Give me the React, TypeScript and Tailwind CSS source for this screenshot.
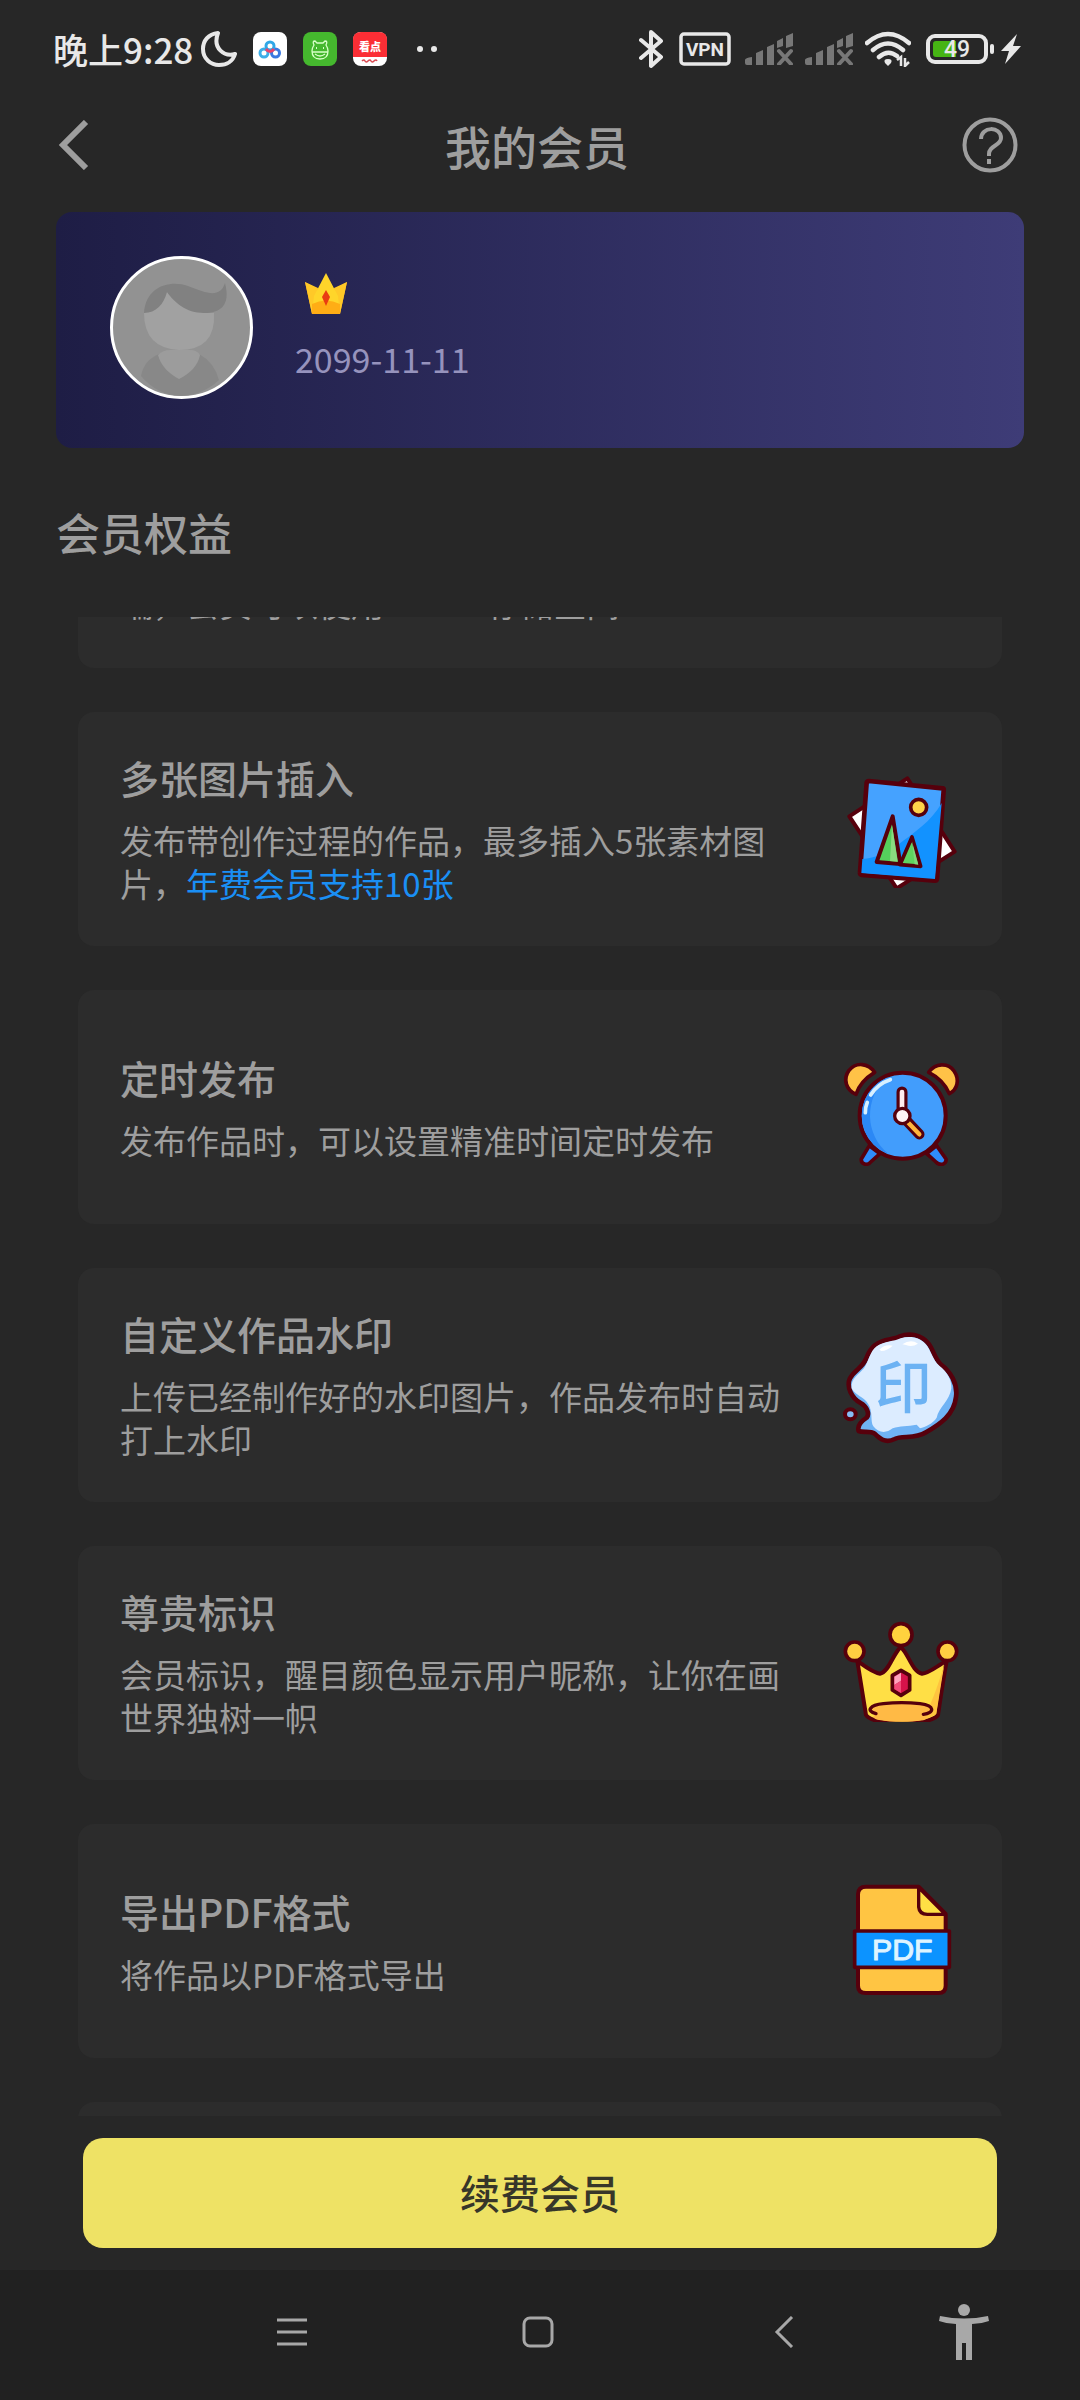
import type { ReactNode } from 'react'

type Benefit = {
  title: string
  desc: string
  highlight?: string
  icon: ReactNode
}

const OUTLINE = '#56000c'

function PhotoIcon() {
  return (
    <svg className="size-[120px]" viewBox="66 55 360 360" strokeLinejoin="round" aria-hidden="true">
      <path d="M262 86 L404 306 L230 416 L88 200 Z" fill="#fff" stroke={OUTLINE} strokeWidth="12" />
      <path d="M146 94 L368 116 Q372 117 371 122 L351 388 Q350 393 345 393 L125 376 Q119 375 120 369 L140 99 Q141 94 146 94 Z" fill="#45a2ff" stroke={OUTLINE} strokeWidth="14" />
      <path d="M365 160 C335 215 280 250 236 284 C205 310 165 326 127 328 L124 370 L345 388 Z" fill="#1292ff" />
      <circle cx="296" cy="173" r="24" fill="#ffd24a" stroke={OUTLINE} strokeWidth="11" />
      <path d="M276 262 L302 350 L240 345 Z" fill="#5fd45f" stroke={OUTLINE} strokeWidth="11" />
      <path d="M276 275 L284 344 L295 345 Z" fill="#7ed97a" />
      <path d="M218 200 L241 343 L170 337 Z" fill="#55cf5c" stroke={OUTLINE} strokeWidth="12" />
      <path d="M216 226 L210 334 L233 336 Z" fill="#8bdb80" />
    </svg>
  )
}

function ClockIcon() {
  return (
    <svg className="size-[120px]" viewBox="66 19 360 360" strokeLinejoin="round" strokeLinecap="round" aria-hidden="true">
      <path d="M148 318 L124 358 Q122 370 136 374 Q146 375 152 367 L180 342 Z" fill="#2f8cfb" stroke={OUTLINE} strokeWidth="11" />
      <path d="M350 318 L378 358 Q380 369 368 374 Q355 376 348 367 L320 342 Z" fill="#2f8cfb" stroke={OUTLINE} strokeWidth="11" />
      <path d="M164 98 C145 70 108 66 87 92 C68 118 78 152 108 164 C117 136 138 114 164 98 Z" fill="#ffc247" stroke={OUTLINE} strokeWidth="11" />
      <path d="M326 98 C346 70 384 68 402 94 C420 120 412 150 388 162 C377 136 354 112 326 98 Z" fill="#ffc247" stroke={OUTLINE} strokeWidth="11" />
      <circle cx="248" cy="228" r="129" fill="#429dfc" stroke={OUTLINE} strokeWidth="12" />
      <path d="M200 115 A123 123 0 0 0 205 343 A150 150 0 0 1 200 115 Z" fill="#2b88f5" />
      <path d="M152 166 Q173 132 211 120 M142 188 Q136 202 136 219" fill="none" stroke="#d8f0ff" strokeWidth="11" />
      <path d="M246 157 V215" stroke={OUTLINE} strokeWidth="33" />
      <path d="M246 157 V215" stroke="#ffecee" strokeWidth="14" />
      <path d="M260 243 L298 284" stroke={OUTLINE} strokeWidth="31" />
      <path d="M262 246 L298 284" stroke="#ffb63d" strokeWidth="13" />
      <circle cx="247" cy="229" r="23" fill="#fff4f5" stroke={OUTLINE} strokeWidth="10" />
    </svg>
  )
}

function StampIcon() {
  return (
    <svg className="size-[120px]" viewBox="66 43 360 360" strokeLinejoin="round" aria-hidden="true">
      <path d="M166 106 C192 86 218 92 240 80 C270 68 304 78 322 98 C340 116 340 142 362 164 C390 184 414 222 408 262 C402 316 360 344 318 368 C284 390 246 376 224 388 C196 402 178 386 164 372 C150 362 130 370 116 364 C110 346 128 332 140 324 C150 312 140 290 122 280 C96 266 78 232 90 206 C104 180 126 176 138 148 C146 128 152 116 166 106 Z" fill="#70b3f5" stroke={OUTLINE} strokeWidth="14" />
      <path d="M170 110 C194 94 222 96 242 86 C270 76 300 84 316 102 C334 122 336 148 358 168 C380 186 396 210 394 236 C390 272 356 294 350 324 C338 342 316 352 300 356 L290 345 C262 350 240 348 218 356 C198 372 176 370 160 350 C150 334 160 306 144 282 C132 262 104 256 95 236 C92 206 116 196 132 176 C148 152 150 124 170 110 Z" fill="#dcecff" />
      <path d="M178 120 Q195 103 218 108 Q202 123 184 124 Z M247 104 Q272 87 294 102 Q276 114 258 106 Z" fill="#fff" />
      <ellipse cx="91" cy="314" rx="16" ry="15" fill="#86bdf5" stroke={OUTLINE} strokeWidth="12" />
      <text x="250" y="295" textAnchor="middle" fontSize="170" fontWeight="500" fill="#6cb2f3" className="font-['Noto_Sans_CJK_SC',sans-serif]">印</text>
    </svg>
  )
}

function CrownIcon() {
  return (
    <svg className="size-[120px]" viewBox="66 7 360 360" strokeLinejoin="round" strokeLinecap="round" aria-hidden="true">
      <path d="M112 184 C134 200 160 220 180 222 C206 218 216 168 242 142 C266 162 276 216 306 222 C330 220 354 196 380 184 C370 236 362 292 354 346 C330 380 160 380 138 346 Z" fill="#ffdf45" stroke={OUTLINE} strokeWidth="12" />
      <path d="M373 196 C364 244 357 296 349 342 C330 356 310 360 300 361 C334 326 350 264 373 196 Z" fill="#ffc43f" />
      <path d="M168 342 C136 334 150 316 190 312 C226 308 264 308 300 312 C346 318 344 340 310 344 Q330 356 310 362 Q240 372 172 360 Q150 354 168 342 Z" fill="#ffba45" />
      <path d="M168 342 C136 334 150 316 190 312 C226 308 264 308 300 312 C346 318 344 340 310 344" fill="none" stroke={OUTLINE} strokeWidth="10" />
      <circle cx="243" cy="105" r="33" fill="#ffd23e" stroke={OUTLINE} strokeWidth="11" />
      <circle cx="104" cy="155" r="28" fill="#ffce42" stroke={OUTLINE} strokeWidth="11" />
      <circle cx="382" cy="155" r="28" fill="#ffce42" stroke={OUTLINE} strokeWidth="11" />
      <path d="M243 212 L269 227 V271 L243 287 L217 271 V227 Z" fill="#d6124a" stroke={OUTLINE} strokeWidth="11" />
      <path d="M243 219 L223 231 V256 L243 243 Z" fill="#ffa3bc" />
      <path d="M243 243 L223 256 V268 L243 280 Z" fill="#f24b79" />
    </svg>
  )
}

function PdfIcon() {
  return (
    <svg className="size-[120px]" viewBox="66 61 360 360" strokeLinejoin="round" aria-hidden="true">
      <path d="M138 81 H296 L377 163 V378 Q377 400 355 400 H138 Q114 400 114 378 V104 Q114 81 138 81 Z" fill="#ffc543" stroke={OUTLINE} strokeWidth="12" />
      <path d="M296 84 V142 Q298 164 322 164 H376 Z" fill="#ffe045" stroke={OUTLINE} strokeWidth="10" />
      <rect x="104" y="214" width="284" height="109" fill="#0c93ff" stroke={OUTLINE} strokeWidth="11" />
      <text x="247" y="302" textAnchor="middle" fontSize="91" fill="#dff4ff" stroke="#dff4ff" strokeWidth="3" className="font-['Liberation_Sans',sans-serif]">PDF</text>
    </svg>
  )
}

const benefits: Benefit[] = [
  {
    title: '多张图片插入',
    desc: '发布带创作过程的作品，最多插入5张素材图片，',
    highlight: '年费会员支持10张',
    icon: <PhotoIcon />,
  },
  { title: '定时发布', desc: '发布作品时，可以设置精准时间定时发布', icon: <ClockIcon /> },
  { title: '自定义作品水印', desc: '上传已经制作好的水印图片，作品发布时自动打上水印', icon: <StampIcon /> },
  { title: '尊贵标识', desc: '会员标识，醒目颜色显示用户昵称，让你在画世界独树一帜', icon: <CrownIcon /> },
  { title: '导出PDF格式', desc: '将作品以PDF格式导出', icon: <PdfIcon /> },
]

function BenefitCard({ item }: { item: Benefit }) {
  return (
    <li className="flex h-[234px] shrink-0 items-center justify-between rounded-2xl bg-[#2c2c2c] pr-10 pb-[2px] pl-[42px]">
      <div className="w-[670px]">
        <h3 className="mb-4 text-[39px] leading-[52px] font-medium">{item.title}</h3>
        <p className="text-[33px] leading-[43px]">
          {item.desc}
          {item.highlight && <span className="text-[#1a8ff5]">{item.highlight}</span>}
        </p>
      </div>
      {item.icon}
    </li>
  )
}

function SignalIcon() {
  return (
    <svg className="h-8 w-12" viewBox="0 0 48 32" fill="#777" aria-hidden="true">
      <path d="M0 27 Q0 25 7 24 V32 H2 Q0 32 0 30 Z M11 20 L18 17 V32 H11 Z M22 14 L29 11 V32 H22 Z M32 8 L38 5 V13 L32 15 Z M41 3 L48 0 V13 L41 15 Z" />
      <path d="M34 18 L46 31 M46 18 L34 31" stroke="#777" strokeWidth="4" strokeLinecap="round" />
    </svg>
  )
}

function StatusBar() {
  return (
    <div className="flex h-[98px] items-center justify-between pr-[59px] pl-[53px] text-[#e8e8e8]">
      <div className="flex items-center">
        <span className="text-[35px] leading-[44px] font-medium">晚上9:28</span>
        <svg className="ml-2 h-9 w-9" viewBox="0 0 36 36" fill="none" stroke="currentColor" strokeWidth="4" strokeLinejoin="round" aria-hidden="true">
          <path d="M17 2 C7 3 2 10 2 18 C2 28 10 34 18 34 C26 34 32 30 34 23 C24 26 11 18 17 2 Z" />
        </svg>
        <svg className="ml-4 size-[34px]" viewBox="0 0 34 34" fill="none" aria-hidden="true">
          <rect width="34" height="34" rx="8" fill="#fff" />
          <circle cx="11" cy="21" r="4" stroke="#3caee8" strokeWidth="3" />
          <circle cx="22.5" cy="21" r="4" stroke="#3a78e0" strokeWidth="3" />
          <circle cx="17" cy="14" r="4" stroke="#30a7e6" strokeWidth="3" />
          <path d="M13 17 Q17 22 21 17" stroke="#e8436b" strokeWidth="3" />
        </svg>
        <svg className="ml-4 size-[34px]" viewBox="0 0 34 34" fill="none" stroke="#d8ffc8" strokeWidth="1.3" aria-hidden="true">
          <rect width="34" height="34" rx="8" fill="#45b82e" stroke="none" />
          <path d="M11 13 Q9 9 12 9 L14 11 H20 L22 9 Q25 9 23 13 Q25 16 25 19 Q25 27 17 27 Q9 27 9 19 Q9 16 11 13 Z M9 20 H25 M12 22 Q17 26 22 22" />
          <path d="M13 16 h1 M20 16 h1" strokeWidth="2" />
        </svg>
        <svg className="ml-4 size-[34px]" viewBox="0 0 34 34" aria-hidden="true">
          <rect width="34" height="34" rx="8" fill="#fff" />
          <path d="M0 25 V8 Q0 0 8 0 H26 Q34 0 34 8 V25 Z" fill="#fb2e35" />
          <text x="17" y="19" textAnchor="middle" fontSize="11" fontWeight="900" fill="#fff">看点</text>
          <path d="M9 29 q2 -2 3 0 t3 0 t3 0 t3 0 t3 0" fill="none" stroke="#d84850" strokeWidth="1.5" />
        </svg>
        <svg className="ml-[29px] h-2 w-6" viewBox="0 0 24 8" fill="currentColor" aria-hidden="true">
          <circle cx="4" cy="4" r="3" />
          <circle cx="18" cy="4" r="3" />
        </svg>
      </div>

      <div className="flex items-center">
        <svg className="h-10 w-6" viewBox="0 0 24 40" fill="none" stroke="currentColor" strokeWidth="4" strokeLinecap="round" strokeLinejoin="round" aria-hidden="true">
          <path d="M2 11 L22 28 L12 37 V3 L22 12 L2 29" />
        </svg>
        <svg className="ml-4 h-[34px] w-[52px]" viewBox="0 0 52 34" aria-hidden="true">
          <rect x="2" y="2" width="48" height="30" rx="3" fill="none" stroke="currentColor" strokeWidth="3.5" />
          <text x="26" y="24" textAnchor="middle" fontSize="19" fontWeight="700" fill="currentColor" className="font-['Roboto',sans-serif]">VPN</text>
        </svg>
        <span className="ml-[14px] flex gap-3">
          <SignalIcon />
          <SignalIcon />
        </span>
        <svg className="ml-3 h-9 w-[46px]" viewBox="0 0 46 36" fill="none" stroke="currentColor" strokeWidth="4.5" strokeLinecap="round" aria-hidden="true">
          <path d="M2 12 Q23 -6 44 12 M8 19 Q23 6 38 19 M14 26 Q23 18 32 25" />
          <path d="M23 28 Q28 28 26 32 L23 35 L20 32 Q18 28 23 28 Z" fill="currentColor" stroke="none" />
          <path d="M32 29 L36 26 V35 M40 27 V35 L44 31" strokeWidth="2.5" strokeLinecap="butt" />
        </svg>
        <svg className="ml-[15px] h-[30px] w-[68px]" viewBox="0 0 68 30" aria-hidden="true">
          <rect x="2" y="2" width="58" height="26" rx="7" fill="none" stroke="currentColor" strokeWidth="4" />
          <path d="M10 7 H30 V23 H10 Q7 23 7 20 V10 Q7 7 10 7 Z" fill="#46b414" />
          <rect x="64" y="10" width="4" height="10" rx="2" fill="currentColor" />
          <text x="31" y="23" textAnchor="middle" fontSize="23" fontWeight="500" fill="currentColor" className="font-['Roboto',sans-serif]">49</text>
        </svg>
        <svg className="ml-[7px] h-[30px] w-5" viewBox="0 0 20 30" fill="currentColor" aria-hidden="true">
          <path d="M16 0 L0 17 H8 L4 30 L20 12 H12 Z" />
        </svg>
      </div>
    </div>
  )
}

function Avatar() {
  return (
    <svg className="size-[143px] shrink-0" viewBox="0 0 143 143" role="img" aria-label="头像">
      <circle cx="71.5" cy="71.5" r="70" fill="#929292" stroke="#fff" strokeWidth="3" />
      <path d="M31 120 Q34 104 49 98 L89 98 Q104 106 109 124 Q93 139 71 140 Q47 139 31 120 Z" fill="#888" />
      <path d="M48 99 Q53 94 60 94 H80 Q87 94 90 99 Q87 114 69 123 Q52 114 48 99 Z" fill="#9c9c9c" />
      <path d="M34 57 Q44 48 57 36 Q76 58 104 57 Q106 94 69 94 Q34 92 34 57 Z" fill="#a1a1a1" />
      <path d="M34 57 C36 30 60 24 78 30 C98 38 110 42 115 27 C121 50 110 57 94 57 C76 57 64 46 57 36 C54 48 46 57 34 57 Z" fill="#818181" />
    </svg>
  )
}

function App() {
  return (
    <div className="flex min-h-screen flex-col bg-[#272727] font-['Noto_Sans_CJK_SC',sans-serif] text-[#9e9e9e]">
      <StatusBar />

      <header className="flex h-[94px] items-center justify-between pr-[62px] pl-14">
        <button type="button" aria-label="返回" className="flex w-[60px]">
          <svg className="h-[50px] w-9" viewBox="0 0 36 50" fill="none" stroke="currentColor" strokeWidth="6" aria-hidden="true">
            <path d="M30 2 L7 25 L30 48" />
          </svg>
        </button>
        <h1 className="text-[46px] leading-[60px] font-medium">我的会员</h1>
        <button type="button" aria-label="帮助" className="flex w-[60px] justify-end">
          <svg className="size-14" viewBox="0 0 56 56" fill="none" stroke="currentColor" strokeWidth="4" aria-hidden="true">
            <circle cx="28" cy="28" r="25.5" />
            <path d="M19 22 C19 9 39 9 39 21 C39 29 27 28 27 37 V39 M27 42 V47" />
          </svg>
        </button>
      </header>

      <section className="mx-14 mt-5 flex h-[236px] items-center gap-[42px] rounded-2xl bg-linear-to-r from-[#1e1d45] to-[#3e3c77] px-[54px] pb-[6px]">
        <Avatar />
        <div className="flex flex-col">
          <svg className="ml-[10px] h-[42px] w-[42px]" viewBox="0 0 42 42" role="img" aria-label="会员">
            <path d="M0 9 L14 17 L28 17 L42 9 L35 41 H7 Z" fill="#ffa51f" />
            <path d="M0 9 L13 15 L10 41 H7 Z M42 9 L29 15 L32 41 H35 Z" fill="#ffc928" />
            <path d="M21 0 L33 23 L35 41 H7 L9 23 Z" fill="#ffd52a" />
            <path d="M7 31 Q21 24 35 31 V41 H7 Z" fill="#ffad15" />
            <path d="M21 17 L25 24 L21 33 L17 24 Z" fill="#e93c12" />
          </svg>
          <time className="mt-[22px] text-[34px] leading-[44px] text-[#9693bd]">2099-11-11</time>
        </div>
      </section>

      <h2 className="mx-14 mt-[54px] text-[44px] leading-[60px] font-medium">会员权益</h2>

      <ul className="mt-[55px] flex h-[1499px] flex-col gap-11 overflow-hidden px-[78px]">
        {/* tail of the storage card, scrolled under the heading */}
        <li className="flex h-[51px] shrink-0 items-end rounded-b-2xl bg-[#2c2c2c] px-[42px] pb-[43px]">
          <p className="text-[33px] leading-[43px]">端，会员可以使用500MB存储空间</p>
        </li>
        {benefits.map((item) => (
          <BenefitCard key={item.title} item={item} />
        ))}
        <li className="h-[234px] shrink-0 rounded-2xl bg-[#2c2c2c]" />
      </ul>

      <div className="px-[83px] py-[22px]">
        <button type="button" className="h-[110px] w-full rounded-[20px] bg-[#eee265] pb-[2px] text-[40px] font-medium text-[#373629]">
          续费会员
        </button>
      </div>

      <nav className="flex flex-1 items-start bg-[#212121] pr-[59px] pl-[169px]">
        <button type="button" aria-label="最近任务" className="flex h-[124px] flex-1 items-center justify-center">
          <svg className="size-8" viewBox="0 0 32 32" stroke="#a8a8a8" strokeWidth="3" aria-hidden="true">
            <path d="M1 4 H31 M1 16 H31 M1 28 H31" />
          </svg>
        </button>
        <button type="button" aria-label="主屏幕" className="flex h-[124px] flex-1 items-center justify-center">
          <svg className="size-8" viewBox="0 0 32 32" fill="none" stroke="#a8a8a8" strokeWidth="3" aria-hidden="true">
            <rect x="2" y="2" width="28" height="28" rx="6" />
          </svg>
        </button>
        <button type="button" aria-label="返回上一级" className="flex h-[124px] flex-1 items-center justify-center">
          <svg className="size-8" viewBox="0 0 32 32" fill="none" stroke="#a8a8a8" strokeWidth="3" aria-hidden="true">
            <path d="M24 1 L9 16 L24 31" />
          </svg>
        </button>
        <button type="button" aria-label="无障碍" className="flex h-[124px] w-[114px] items-center justify-center">
          <svg className="h-14 w-[50px]" viewBox="0 0 50 56" fill="#a8a8a8" aria-hidden="true">
            <circle cx="25" cy="6" r="6" />
            <path d="M1 12 Q25 17 49 12 L50 17 Q42 20 33 20 V56 H27 V39 H23 V56 H17 V20 Q8 20 0 17 Z" />
          </svg>
        </button>
      </nav>
    </div>
  )
}

export default App
